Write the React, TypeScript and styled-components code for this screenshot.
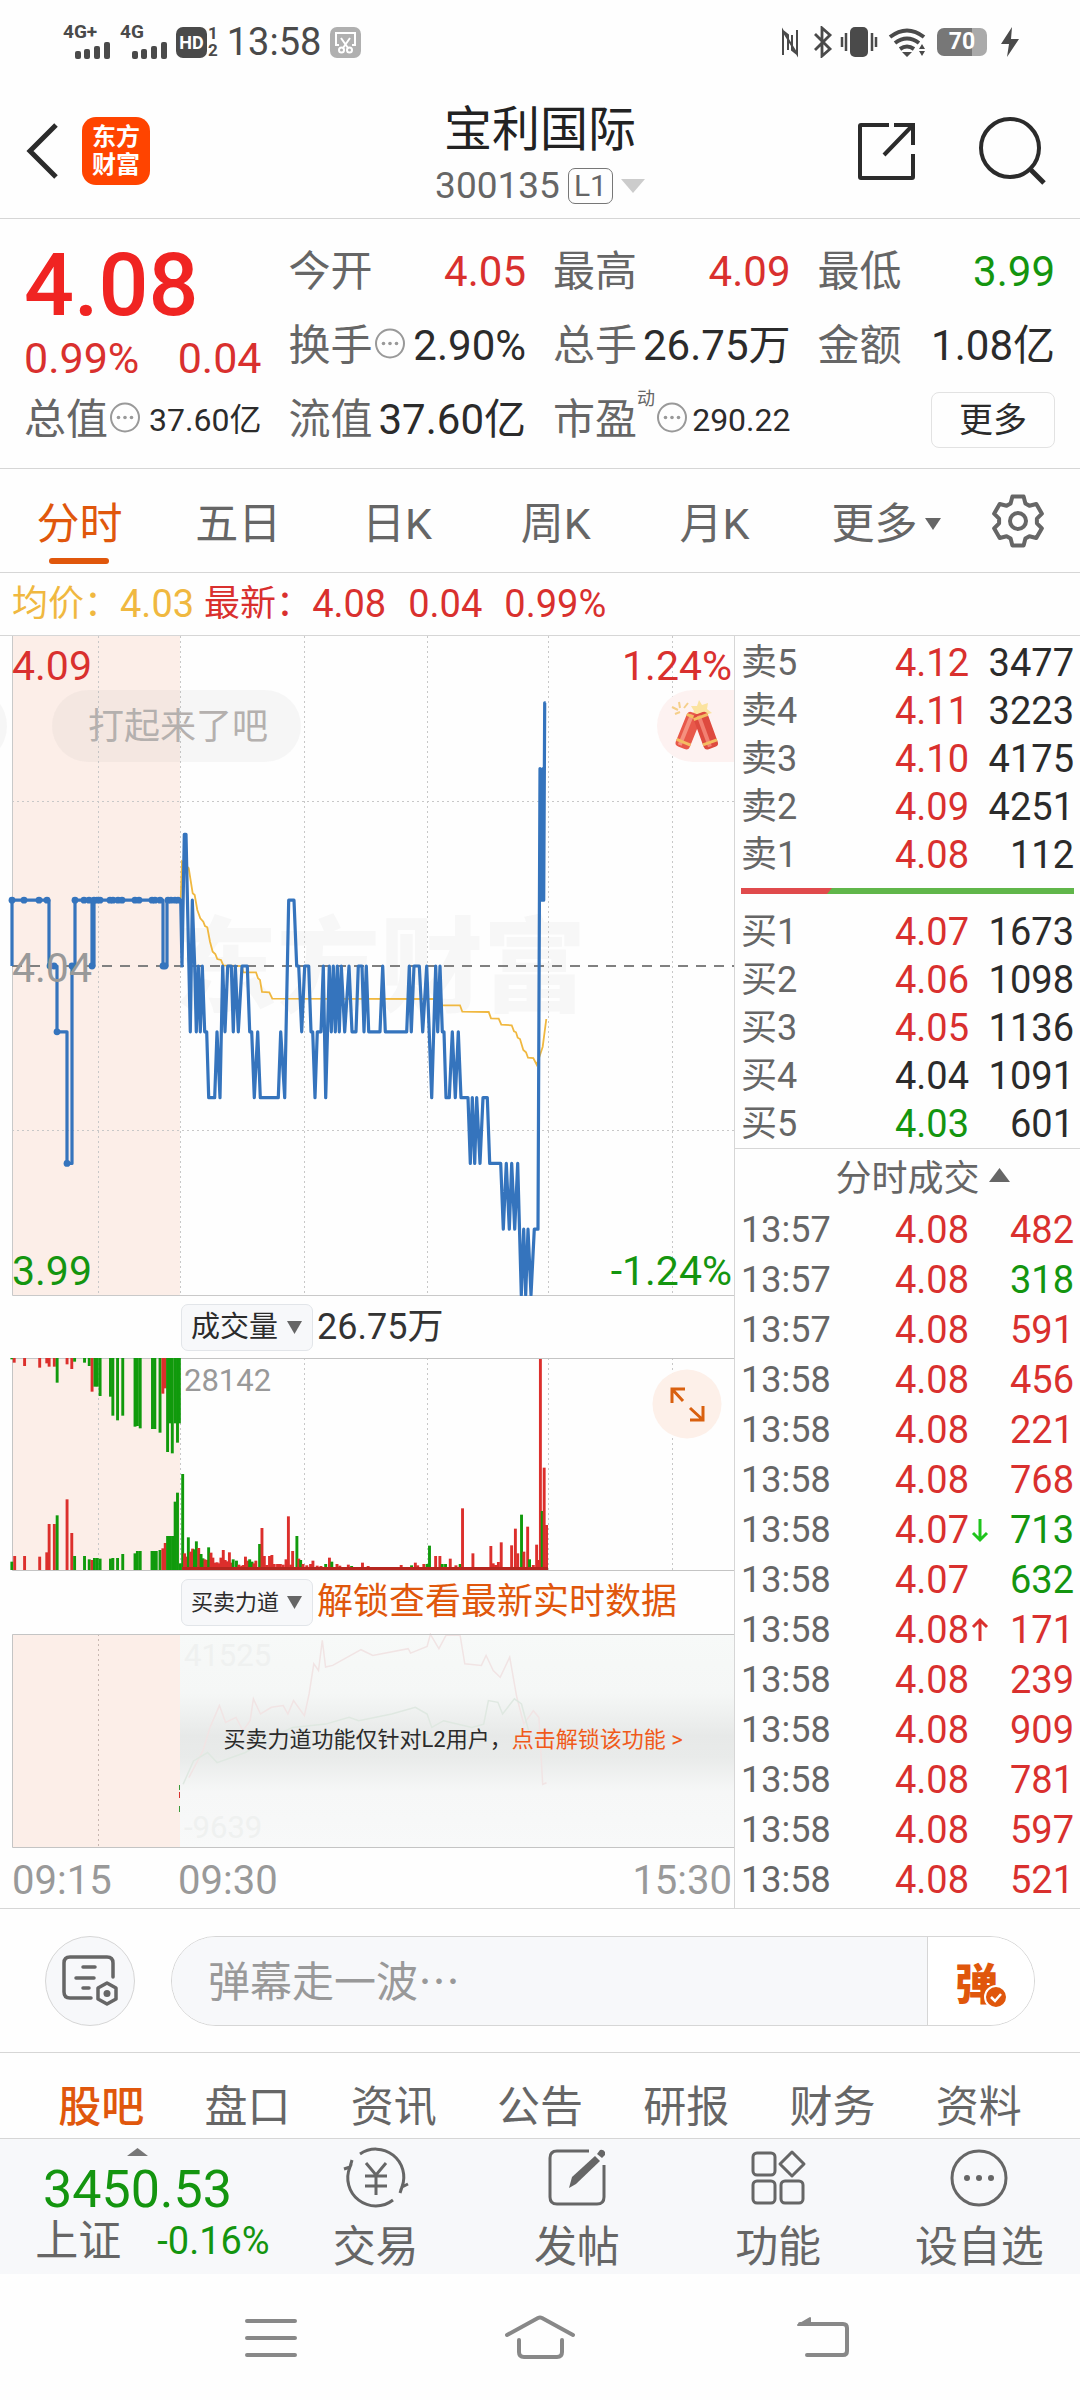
import React from "react";
import styled, { createGlobalStyle, css } from "styled-components";

const C = {
  red: "#d9302e",
  hotRed: "#f02422",
  green: "#14950f",
  ink: "#2b2b2b",
  gray: "#666666",
  light: "#999999",
  line: "#d6d6d6",
  orange: "#e0570c",
  yellow: "#f0b840",
  blue: "#3574bd",
  panel: "#f7f8fa",
  peach: "#fceee8",
};

const FONT = `Roboto, "Noto Sans CJK SC", sans-serif`;

const GlobalStyle = createGlobalStyle`
  * { box-sizing: border-box; }
  body { margin: 0; background: #fefefe; color: ${C.ink}; font-family: ${FONT}; }
  button, input, select { font-family: inherit; color: inherit; margin: 0; padding: 0; border: 0; background: none; }
  svg { display: block; flex: none; }
  a { text-decoration: none; }
`;

type Tone = "red" | "green" | "ink" | "gray";

const Page = styled.div`
  display: flex;
  flex-direction: column;
  min-height: 100vh;
  white-space: nowrap;
`;

/* ---------- status bar ---------- */

const StatusBar = styled.div`
  display: flex;
  justify-content: space-between;
  height: 84px;
  padding: 0 60px 0 62px;
  color: #4a4a4a;
`;
const StatusGroup = styled.div`
  display: flex;
  align-items: center;
  gap: 9px;
`;
const HdBadge = styled.span`
  width: 31px;
  height: 31px;
  border-radius: 7px;
  background: #4a4a4a;
  color: #fff;
  font-size: 18px;
  font-weight: 700;
  line-height: 31px;
  text-align: center;
`;
const SimStack = styled.span`
  display: grid;
  margin-left: -8px;
  font-size: 17px;
  font-weight: 700;
  line-height: 17px;
`;
const Clock = styled.span`
  font-size: 38px;
  line-height: 44px;
`;
const Battery = styled.span`
  width: 50px;
  height: 28px;
  margin-right: 4px;
  border-radius: 7px;
  background: linear-gradient(90deg, #777 70%, #aaa 70%);
  color: #fff;
  font-size: 23px;
  font-weight: 700;
  line-height: 28px;
  text-align: center;
`;

/* ---------- title bar ---------- */

const TitleBar = styled.header`
  display: grid;
  grid-template-columns: 1fr auto 1fr;
  align-items: center;
  height: 135px;
  padding: 0 24px;
  border-bottom: 1px solid ${C.line};
`;
const Side = styled.div<{ $end?: boolean }>`
  display: flex;
  align-items: center;
  gap: ${(p) => (p.$end ? "60px" : "22px")};
  padding-right: ${(p) => (p.$end ? "10px" : "0")};
  justify-content: ${(p) => (p.$end ? "flex-end" : "flex-start")};
`;
const IconButton = styled.button`
  display: flex;
`;
const Logo = styled.a`
  display: grid;
  place-content: center;
  width: 68px;
  height: 68px;
  border-radius: 14px;
  background: #ff4400;
  color: #fff;
  font-size: 24px;
  font-weight: 700;
  line-height: 28px;
`;
const TitleBlock = styled.div`
  display: flex;
  flex-direction: column;
  align-items: center;
  padding-top: 8px;
`;
const StockName = styled.h1`
  margin: 0;
  font-size: 48px;
  font-weight: 400;
  line-height: 62px;
  color: #222;
`;
const CodeButton = styled.button`
  display: flex;
  align-items: center;
  gap: 8px;
  color: ${C.gray};
  font-size: 37px;
  line-height: 50px;
`;
const Level = styled.span`
  padding: 0 5px;
  border: 1px solid #777;
  border-radius: 7px;
  font-size: 30px;
  line-height: 34px;
`;

/* ---------- quote ---------- */

const Quote = styled.section`
  display: grid;
  grid-template-columns: repeat(4, minmax(0, 1fr));
  grid-template-rows: repeat(3, 74px);
  column-gap: 27px;
  padding: 16px 25px 11px 24px;
  border-bottom: 1px solid ${C.line};
`;
const Lead = styled.div`
  grid-row: span 2;
  color: ${C.red};
`;
const Price = styled.div`
  font-size: 88px;
  font-weight: 500;
  line-height: 100px;
  color: ${C.hotRed};
`;
const Change = styled.div`
  display: flex;
  justify-content: space-between;
  font-size: 43px;
  line-height: 46px;
`;
const Field = styled.div`
  display: flex;
  align-items: center;
  justify-content: space-between;
`;
const FieldName = styled.span`
  display: flex;
  align-items: center;
  color: ${C.gray};
  font-size: 42px;
  line-height: 60px;
`;
const Sup = styled.sup`
  align-self: flex-start;
  font-size: 18px;
  line-height: 18px;
`;
const tone = css<{ $tone?: Tone }>`
  color: ${(p) => C[p.$tone ?? "ink"]};
`;
const FieldValue = styled.span<{ $tone?: Tone; $small?: boolean }>`
  font-size: ${(p) => (p.$small ? "32px" : "42px")};
  line-height: 60px;
  ${tone}
`;
const MoreButton = styled.button`
  justify-self: end;
  align-self: center;
  width: 124px;
  height: 56px;
  border: 1px solid #e2e2e2;
  border-radius: 8px;
  font-size: 34px;
  line-height: 52px;
`;

/* ---------- period tabs ---------- */

const Periods = styled.nav`
  display: grid;
  grid-template-columns: repeat(5, 1fr) 184px 102px;
  height: 104px;
  border-bottom: 1px solid ${C.line};
`;
const Period = styled.button<{ $active?: boolean }>`
  display: flex;
  flex-direction: column;
  align-items: center;
  padding-top: 24px;
  color: ${(p) => (p.$active ? C.orange : C.gray)};
  font-size: 43px;
  line-height: 62px;
  &::after {
    content: "";
    width: 60px;
    height: 6px;
    margin-top: 3px;
    border-radius: 3px;
    background: ${(p) => (p.$active ? C.orange : "transparent")};
  }
`;
const PeriodLabel = styled.span`
  display: flex;
  align-items: center;
  gap: 7px;
`;
const SettingsButton = styled(IconButton)`
  align-items: center;
  padding-left: 12px;
`;

const Averages = styled.div`
  display: flex;
  align-items: center;
  height: 63px;
  padding-left: 12px;
  border-bottom: 1px solid ${C.line};
  font-size: 38px;
  color: ${C.red};
`;
const AvgName = styled.span<{ $yellow?: boolean }>`
  font-size: 36px;
  line-height: 50px;
  ${(p) => p.$yellow && `color: ${C.yellow};`}
`;
const AvgValue = styled.span<{ $yellow?: boolean }>`
  margin-right: ${(p) => (p.$yellow ? "10px" : "22px")};
  line-height: 50px;
  ${(p) => p.$yellow && `color: ${C.yellow};`}
`;

/* ---------- main area ---------- */

const Main = styled.main`
  display: grid;
  grid-template-columns: minmax(0, 734fr) minmax(0, 346fr);
  border-bottom: 1px solid ${C.line};
`;
const ChartColumn = styled.div`
  display: flex;
  flex-direction: column;
`;
const ChartSvg = styled.svg`
  width: 100%;
  height: auto;
`;
const IndicatorRow = styled.div`
  display: flex;
  align-items: center;
  gap: 4px;
  height: 62px;
  padding-left: 181px;
`;
const SelectBox = styled.span`
  display: flex;
  align-items: center;
  width: 132px;
  height: 47px;
  border: 1px solid #e2e5e9;
  border-radius: 7px;
  background: ${C.panel};
`;
const Select = styled.select<{ $dense?: boolean }>`
  appearance: none;
  width: 130px;
  height: 45px;
  padding-left: 9px;
  font-size: ${(p) => (p.$dense ? "22px" : "29px")};
  flex: none;
`;
const SelectCaret = styled.span`
  margin-left: -25px;
  pointer-events: none;
`;
const IndicatorValue = styled.span<{ $orange?: boolean }>`
  font-size: 36px;
  line-height: 50px;
  color: ${(p) => (p.$orange ? C.orange : "#333")};
`;
const LockedPanel = styled.div`
  position: relative;
`;
const LockedNotice = styled.p`
  position: absolute;
  inset: 0 0 0 24%;
  display: flex;
  align-items: center;
  justify-content: center;
  margin: 0;
  padding: 0 4px 8px 0;
  font-size: 22px;
`;
const UnlockLink = styled.a`
  color: #f05a1a;
`;
const TimeAxis = styled.div`
  display: grid;
  grid-template-columns: 166px 1fr auto;
  padding: 6px 2px 0 12px;
  color: ${C.light};
  font-size: 40px;
  line-height: 54px;
`;

/* ---------- order book ---------- */

const BookColumn = styled.aside`
  display: flex;
  flex-direction: column;
  border-left: 1px solid ${C.line};
`;
const Book = styled.div`
  display: flex;
  flex-direction: column;
  padding: 3px 6px 0;
  border-bottom: 1px solid ${C.line};
`;
const Table = styled.table`
  width: 100%;
  border-collapse: collapse;
  table-layout: fixed;
`;
const Row = styled.tr<{ $tall?: boolean }>`
  height: ${(p) => (p.$tall ? "50px" : "48px")};
`;
const NameCell = styled.th`
  padding: 0;
  color: ${C.gray};
  font-size: 36px;
  font-weight: 400;
  line-height: 44px;
  text-align: left;
`;
const NumCell = styled.td<{ $tone?: Tone }>`
  padding: 0;
  font-size: 38px;
  line-height: 44px;
  text-align: right;
  ${tone}
`;
const PriceCell = styled(NumCell)`
  width: 124px;
`;
const VolumeCell = styled(NumCell)`
  width: 105px;
`;
const PriceWithTick = styled.span`
  display: inline-flex;
  align-items: center;
`;
const TickSvg = styled.svg`
  width: 18px;
  margin-right: -20px;
  margin-left: 2px;
`;
const RatioSvg = styled.svg`
  width: 100%;
  height: 6px;
  margin: 9px 0 14px;
`;
const TradesToggle = styled.button`
  display: flex;
  align-items: center;
  justify-content: center;
  gap: 9px;
  height: 52px;
  padding-left: 30px;
  color: ${C.gray};
  font-size: 36px;
`;
const Trades = styled.div`
  padding: 4px 6px 0;
`;

/* ---------- comment bar ---------- */

const CommentBar = styled.form`
  display: flex;
  align-items: center;
  gap: 36px;
  height: 144px;
  padding: 0 45px;
  border-bottom: 1px solid ${C.line};
`;
const RoundButton = styled.button`
  display: grid;
  place-items: center;
  flex: none;
  width: 90px;
  height: 90px;
  border: 1px solid ${C.line};
  border-radius: 45px;
  background: ${C.panel};
`;
const InputBox = styled.div`
  display: flex;
  flex: 1;
  height: 90px;
  overflow: hidden;
  border: 1px solid ${C.line};
  border-radius: 45px;
`;
const CommentInput = styled.input`
  flex: 1;
  min-width: 0;
  padding: 4px 36px 0;
  background: ${C.panel};
  font-size: 42px;
  &::placeholder { color: ${C.light}; opacity: 1; }
`;
const BulletButton = styled.button`
  display: flex;
  align-items: center;
  width: 107px;
  padding-left: 27px;
  border-left: 1px solid ${C.line};
  background: #fff;
  color: ${C.orange};
  font-size: 43px;
  font-weight: 900;
`;
const CheckSvg = styled.svg`
  align-self: flex-end;
  margin: 0 0 16px -14px;
`;

/* ---------- section tabs, bottom bar ---------- */

const Sections = styled.nav`
  display: grid;
  grid-template-columns: repeat(7, 1fr);
  height: 85px;
  padding: 22px 28px 0;
`;
const SectionLink = styled.a<{ $active?: boolean }>`
  color: ${(p) => (p.$active ? C.orange : C.gray)};
  font-size: 43px;
  font-weight: ${(p) => (p.$active ? 500 : 400)};
  line-height: 64px;
  text-align: center;
`;
const BottomBar = styled.footer`
  display: grid;
  grid-template-columns: 275px repeat(4, 1fr);
  height: 136px;
  border-top: 1px solid ${C.line};
  background: ${C.panel};
`;
const IndexButton = styled.button`
  display: flex;
  flex-direction: column;
  align-items: center;
  padding-top: 9px;
  color: ${C.green};
`;
const IndexValue = styled.span`
  padding-top: 4px;
  font-size: 52px;
  line-height: 60px;
`;
const IndexRow = styled.span`
  display: flex;
  align-items: center;
  gap: 36px;
  padding-left: 30px;
  font-size: 38px;
  line-height: 42px;
`;
const IndexName = styled.span`
  color: ${C.gray};
  font-size: 43px;
`;
const Action = styled.button`
  display: flex;
  flex-direction: column;
  align-items: center;
  padding-top: 6px;
  color: ${C.gray};
  font-size: 43px;
  line-height: 76px;
`;
const SystemNav = styled.nav`
  display: grid;
  grid-template-columns: repeat(3, 1fr);
  height: 126px;
  padding: 0 135px;
`;
const SystemButton = styled.button`
  display: grid;
  place-items: center;
`;

/* ---------- small drawings ---------- */

const Caret = ({ w, h, color, up }: { w: number; h: number; color: string; up?: boolean }) => (
  <svg width={w} height={h} viewBox="0 0 20 10" preserveAspectRatio="none" aria-hidden="true">
    <path d={up ? "M0 10 10 0 20 10z" : "M0 0H20L10 10z"} fill={color} />
  </svg>
);

const Info = () => (
  <svg width="33" height="37" viewBox="-1 0 33 37" fill={C.light} aria-hidden="true">
    <circle cx="16" cy="15.500" r="14" fill="none" stroke={C.light} strokeWidth="2" />
    <circle cx="9.500" cy="15.500" r="1.800" />
    <circle cx="16" cy="15.500" r="1.800" />
    <circle cx="22.500" cy="15.500" r="1.800" />
  </svg>
);

const Signal = ({ label }: { label: string }) => (
  <svg width="48" height="50" viewBox="0 -7 48 50" fill="#4a4a4a" aria-hidden="true">
    <text x="1" y="14" fontSize="19" fontWeight="700" fontFamily={FONT}>{label}</text>
    <rect x="13" y="27" width="6" height="8" rx="2" />
    <rect x="22" y="25" width="6" height="10" rx="2" />
    <rect x="32" y="22" width="6" height="13" rx="2" />
    <rect x="42" y="18" width="6" height="17" rx="2" />
  </svg>
);

const Scissors = () => (
  <svg width="31" height="31" viewBox="0 0 31 31" fill="none" stroke="#fff" strokeWidth="2" aria-hidden="true">
    <rect width="31" height="31" rx="7" fill="#b0b0b0" stroke="none" />
    <path d="M9 18H6V6H25V18H22M11 11 18 21M20 11 13 21" />
    <circle cx="11.500" cy="23" r="2.500" />
    <circle cx="19.500" cy="23" r="2.500" />
  </svg>
);

const StatusIcons = () => (
  <svg width="148" height="32" viewBox="778 26 148 32" fill="none" stroke="#4a4a4a" strokeWidth="3" aria-hidden="true">
    <path d="M781 55V31L795 54V30M781 31 786 35V50M795 54 790 50V35" strokeWidth="2" />
    <path d="M813 34 828 49 820 56V28L828 35 813 50" strokeWidth="2.800" />
    <rect x="848" y="27" width="18" height="30" rx="5" fill="#4a4a4a" stroke="none" />
    <path d="M844 33V51M840 37V47M870 33V51M874 37V47" strokeWidth="2.500" />
    <path d="M888 37Q905 24 922 37M893 43Q905 34 917 43M898 49Q905 44 912 49" strokeWidth="4" />
    <path d="M905 57 900 52H910zM920 44 917 49H923zM920 56 917 51H923z" fill="#4a4a4a" stroke="none" />
  </svg>
);

const gearPoints = Array.from({ length: 6 }, (_, k) =>
  [[-23, 19], [-13, 25], [13, 25], [23, 19]].map(([d, r]) => {
    const a = ((k * 60 - 90 + d) * Math.PI) / 180;
    return `${(28 + r * Math.cos(a)).toFixed(1)},${(28 + r * Math.sin(a)).toFixed(1)}`;
  }).join(" ")
).join(" ");

const Gear = () => (
  <svg width="56" height="56" viewBox="0 0 56 56" fill="none" stroke={C.gray} strokeWidth="4" strokeLinejoin="round" aria-hidden="true">
    <polygon points={gearPoints} />
    <circle cx="28" cy="28" r="8" />
  </svg>
);

/* ---------- price chart ---------- */

const MID = 966;
const TICK = 65.8;
const levelY = (l: number) => MID - l * TICK;

const preOpen: [number, number][] = [
  [12, 0], [12, 1], [49, 1], [49, 0], [57, 0], [57, -1], [67, -1], [67, -3], [72, -3], [72, 0], [75, 0], [75, 1],
  [92, 1], [92, 0], [94, 0], [94, 1], [163, 1], [163, 0], [167, 0], [167, 1], [180, 1],
];
const session: [number, number][] = [
  [62, 1], [66, 0], [73, 3], [78, 3], [91, -1], [97, 1], [104, 0], [109, -1], [115, 0], [121, -1], [127, 0],
  [134, -1], [140, -1], [146, -2], [164, -2], [171, -1], [180, -2], [188, 0], [195, -1], [203, 0], [214, 0],
  [220, -1], [226, 0], [235, -1], [246, 0], [262, 0], [269, -1], [275, -1], [283, -2], [293, -1], [301, -2],
  [355, -2], [362, -1], [374, -2], [386, 1], [402, 1], [410, 0], [416, 0], [425, -1], [434, 0], [446, 0],
  [453, -1], [458, -1], [465, -2], [472, -1], [483, -1], [490, 0], [497, -2], [508, 0], [514, -1], [520, 0],
  [526, -1], [532, 0], [538, -1], [544, 0], [554, -1], [567, 0], [576, -1], [588, -1], [595, 0], [606, 0],
  [612, -1], [619, 0], [626, -1], [660, -1], [668, 0], [676, -1], [740, -1], [748, 0], [754, -1], [762, 0],
  [778, 0], [788, -1], [800, 0], [815, -2], [827, 0], [833, -1], [840, 0], [847, -1], [852, -1], [858, -2],
  [868, -2], [877, -1], [886, -2], [895, -1], [903, -2], [924, -2], [931, -3], [937, -2], [944, -3], [950, -2],
  [960, -3], [969, -2], [982, -2], [989, -3], [1022, -3], [1030, -4], [1039, -3], [1048, -4], [1055, -3],
  [1064, -4], [1073, -3], [1084, -5], [1091, -4], [1097, -5], [1104, -4], [1113, -5], [1123, -4], [1134, -4],
  [1140, 3], [1145, 1], [1149, 3], [1151, 1], [1154, 4], [1157, 4],
];
// The first spike of the session only reaches two ticks above the open.
const pricePoints = [
  ...preOpen.map(([x, l]) => [x, levelY(l)]),
  ...session.map(([x, l], i) => [160 + x / 3, levelY(l === 3 && i < 5 ? 2 : l)]),
].map((p) => p.map((n) => n.toFixed(1)).join(",")).join(" ");

const average: [number, number][] = [
  [62, 296], [66, 185], [86, 205], [98, 280], [104, 285], [112, 330], [121, 355], [130, 365], [135, 378], [142, 382],
  [150, 425], [158, 455], [166, 462], [172, 477], [183, 480], [190, 496], [245, 498], [250, 517], [288, 517],
  [294, 535], [300, 540], [306, 576], [328, 577], [337, 596], [840, 597], [847, 616], [900, 616], [907, 635],
  [986, 636], [993, 655], [1016, 656], [1024, 674], [1055, 676], [1062, 694], [1068, 697], [1073, 713],
  [1080, 717], [1090, 750], [1098, 757], [1104, 773], [1120, 774], [1130, 794], [1140, 765], [1148, 740], [1159, 657],
];
const averagePoints = average.map(([x, y]) => `${(160 + x / 3).toFixed(1)},${(800 + y / 3).toFixed(1)}`).join(" ");

const dots: [number, number][] = [
  ...[12, 24, 39, 47, 75, 84, 89, 94, 97, 100, 110, 113, 118, 122, 135, 139, 152, 155, 160, 168, 171, 175, 178].map(
    (x) => [x, 1] as [number, number]
  ),
  [50, 0], [54, 0], [72, 0], [92, 0], [163, 0], [165, 0], [57, -1], [67, -3],
];
const gridX = [98, 180, 304, 427, 548, 672];

const Grid = ({ top, bottom }: { top: number; bottom: number }) => (
  <g stroke="#c8c8c8" strokeDasharray="2 3">
    {gridX.map((x) => (
      <path key={x} d={`M${x}.5 ${top}V${bottom}`} />
    ))}
  </g>
);

const PriceChart = () => (
  <ChartSvg viewBox="0 636 734 660" role="img" fontFamily={FONT}>
    <rect x="12" y="636" width="168" height="659" fill={C.peach} />
    <text x="174" y="1004" fontSize="103" fontWeight="900" fill="#f7f7f7">东方财富</text>
    <Grid top={636} bottom={1295} />
    <path d="M12 801.5H734M12 1130.5H734" stroke="#c8c8c8" strokeDasharray="2 3" />
    <path d="M12.500 636V1295.500H734" fill="none" stroke="#c9c9c9" />
    <rect x="-60" y="690" width="67" height="72" rx="36" fill="#969696" fillOpacity=".08" />
    <rect x="52" y="690" width="249" height="72" rx="36" fill="#969696" fillOpacity=".08" />
    <text x="88" y="739" fontSize="36" fill="#b4b0ae">打起来了吧</text>
    <path d="M734 690H693a36 36 0 0 0 0 72H734z" fill="#fdf2f1" />
    <g>
      <path d="M672 707l6 3M679 702l1 6M688 703l-4 5M675 714l5-2" stroke="#f5cf8a" strokeWidth="2" />
      <path d="M699 700l3 5 6-2-1 6 5 4-7 2-3 5-4-4-7 0 3-5-3-5 6 0z" fill="#fbe3a0" />
      <g transform="rotate(22 688 730)">
        <rect x="681" y="712" width="15" height="37" rx="4" fill="#e8584a" />
        <rect x="684" y="714" width="4" height="33" fill="#f5907f" />
        <path d="M681 716H696M681 743H696" stroke="#f3bd62" strokeWidth="3" />
      </g>
      <g transform="rotate(-20 706 730)">
        <rect x="698" y="712" width="15" height="37" rx="4" fill="#de4a3f" />
        <rect x="702" y="714" width="4" height="33" fill="#f28072" />
        <path d="M698 716H713M698 743H713" stroke="#f3bd62" strokeWidth="3" />
      </g>
    </g>
    <polyline points={averagePoints} fill="none" stroke={C.yellow} strokeWidth="1.800" />
    <path d={`M12 ${MID}H734`} stroke="#808080" strokeWidth="2" strokeDasharray="10 8" />
    <polyline points={pricePoints} fill="none" stroke={C.blue} strokeWidth="3.200" strokeLinejoin="round" />
    {dots.map(([x, l], i) => (
      <circle key={i} cx={x} cy={levelY(l)} r="3.400" fill={C.blue} />
    ))}
    <g fontSize="41">
      <text x="12" y="680" fill={C.red}>4.09</text>
      <text x="732" y="680" fill={C.red} textAnchor="end">1.24%</text>
      <text x="12" y="982" fill={C.light}>4.04</text>
      <text x="12" y="1285" fill={C.green}>3.99</text>
      <text x="732" y="1285" fill={C.green} textAnchor="end">-1.24%</text>
    </g>
  </ChartSvg>
);

/* ---------- volume chart ---------- */

type Bar = [number, number, 0 | 1];
const hanging: Bar[] = [
  [25, 208, 1], [30, 218, 0], [52, 228, 0], [84, 233, 0], [99, 220, 0], [104, 230, 0], [115, 230, 0], [121, 278, 1],
  [142, 223, 0], [152, 237, 0], [158, 215, 1], [179, 218, 1], [189, 228, 1], [195, 305, 0], [201, 290, 1], [206, 290, 1],
  [212, 318, 1], [234, 320, 1], [239, 377, 1], [249, 391, 1], [260, 377, 1], [286, 410, 1], [291, 408, 1], [297, 415, 1],
  [323, 417, 1], [328, 417, 1], [339, 428, 1], [345, 311, 0], [350, 295, 0], [355, 486, 1], [361, 400, 1], [365, 490, 1],
  [371, 400, 1], [376, 458, 1], [380, 400, 1],
];
const rising: Bar[] = [
  [25, 815, 1], [31, 798, 0], [52, 798, 0], [84, 800, 0], [99, 787, 0], [104, 702, 0], [115, 702, 0], [121, 676, 1],
  [142, 628, 0], [152, 729, 0], [158, 798, 1], [179, 798, 1], [189, 808, 1], [195, 810, 0], [200, 804, 1], [206, 804, 1],
  [212, 806, 1], [234, 806, 1], [239, 804, 1], [249, 804, 1], [260, 792, 1], [286, 790, 1], [291, 783, 1], [297, 783, 1],
  [322, 783, 1], [327, 783, 1], [331, 783, 1], [339, 780, 1], [345, 775, 0], [350, 759, 0], [355, 738, 1], [361, 738, 1],
  [366, 738, 1], [371, 635, 1], [376, 608, 1], [382, 820, 1], [387, 552, 1], [391, 790, 0], [395, 800, 0], [399, 742, 1],
  [404, 785, 0], [408, 776, 0], [412, 778, 1], [416, 754, 1], [421, 774, 0], [426, 792, 1], [430, 805, 1], [434, 808, 0],
  [438, 810, 0], [442, 772, 1], [447, 788, 0], [451, 803, 0], [456, 818, 0], [460, 817, 0], [464, 820, 0], [468, 803, 0],
  [473, 780, 0], [477, 810, 0], [481, 814, 0], [486, 787, 0], [490, 818, 0], [494, 808, 1], [501, 812, 1], [506, 824, 0],
  [512, 827, 0], [516, 825, 0], [520, 800, 0], [525, 812, 0], [529, 808, 1], [534, 815, 1], [538, 820, 0], [542, 812, 0],
  [550, 762, 1], [555, 714, 0], [560, 798, 0], [565, 825, 0], [571, 798, 0], [576, 795, 0], [581, 822, 0], [588, 822, 0],
  [594, 822, 0], [600, 824, 0], [606, 808, 0], [611, 679, 0], [616, 824, 0], [620, 783, 0], [629, 738, 1], [633, 806, 0],
  [637, 810, 1], [642, 822, 0], [650, 826, 0], [658, 822, 0], [663, 812, 0], [672, 827, 0], [680, 828, 0], [690, 822, 1],
  [698, 803, 0], [703, 815, 1], [714, 822, 0], [720, 827, 0], [738, 824, 0], [745, 828, 1], [768, 818, 0], [780, 828, 0],
  [850, 825, 0], [872, 826, 1], [880, 818, 0], [885, 826, 0], [898, 822, 0], [905, 822, 1], [910, 767, 1], [923, 798, 0],
  [932, 798, 0], [937, 822, 1], [944, 822, 1], [954, 806, 0], [966, 826, 0], [975, 822, 1], [980, 655, 0], [1002, 790, 0],
  [1040, 768, 0], [1045, 820, 0], [1050, 825, 0], [1056, 816, 0], [1062, 757, 0], [1084, 766, 0], [1092, 716, 0],
  [1097, 790, 0], [1105, 674, 1], [1110, 785, 0], [1118, 710, 0], [1122, 808, 1], [1130, 825, 0], [1137, 764, 0],
  [1141, 810, 0], [1145, 207, 0], [1149, 663, 1], [1153, 533, 0], [1158, 705, 0],
];
const barX = (x: number) => x / 2.119 - 1.4;
const barY = (y: number) => 1290 + y / 3;
const barFill = (up: 0 | 1) => (up ? "#109a0c" : "#dc2f2c");

const VolumeChart = () => (
  <ChartSvg viewBox="0 1358 734 213" role="img" fontFamily={FONT}>
    <rect x="12" y="1358" width="168" height="212" fill={C.peach} />
    <Grid top={1358} bottom={1570} />
    <path d="M734 1358.500H12.500V1570.500H734" fill="none" stroke="#c4c4c4" />
    {hanging.map(([x, y, up], i) => (
      <rect key={i} x={barX(x)} y="1358" width="2.900" height={barY(y) - 1358} fill={barFill(up)} />
    ))}
    {rising.map(([x, y, up], i) => (
      <rect key={i} x={barX(x)} y={barY(y)} width="2.900" height={1570 - barY(y)} fill={barFill(up)} />
    ))}
    <rect x="182" y="1567" width="366" height="3" fill="#b5261f" />
    <text x="184" y="1391" fontSize="31" fill={C.light}>28142</text>
    <circle cx="687" cy="1404" r="34.500" fill="#fdf0e9" />
    <path d="M672 1403V1389H685M672 1389 683 1401M703 1406V1420H690M703 1420 690 1408" fill="none" stroke="#d9600f" strokeWidth="3" />
  </ChartSvg>
);

/* ---------- locked strength chart ---------- */

const toPanel = (pts: [number, number][]) =>
  pts.map(([x, y]) => `${(x / 2.119).toFixed(1)},${(1570 + y / 2.986).toFixed(1)}`).join(" ");
const buyLine = toPanel([
  [400, 620], [430, 540], [445, 470], [465, 405], [478, 455], [500, 440], [515, 480], [530, 450], [537, 385], [552, 430],
  [575, 410], [600, 405], [610, 430], [622, 390], [645, 435], [655, 370], [665, 280], [675, 300], [683, 210], [690, 290],
  [705, 285], [765, 238], [790, 255], [865, 235], [870, 248], [905, 228], [912, 192], [930, 235], [945, 195], [975, 195],
  [985, 280], [1020, 285], [1030, 255], [1045, 300], [1060, 320], [1080, 260], [1095, 380], [1110, 460], [1130, 420],
  [1142, 440], [1150, 640], [1158, 635],
]);
const sellLine = toPanel([
  [388, 640], [410, 570], [440, 545], [460, 575], [520, 545], [560, 510], [620, 470], [690, 460], [740, 440], [760, 450],
  [830, 430], [880, 410], [905, 430], [915, 470], [940, 450], [1000, 470], [1025, 460], [1035, 390], [1055, 395],
  [1065, 430], [1090, 385], [1105, 400], [1120, 480],
]);

const StrengthChart = () => (
  <ChartSvg viewBox="0 1633 734 215" role="img" fontFamily={FONT}>
    <defs>
      <linearGradient id="veil" x1="0" y1="0" x2="0" y2="1">
        <stop offset="0" stopColor="#f7f9f8" />
        <stop offset=".28" stopColor="#f5f7f6" />
        <stop offset=".48" stopColor="#e7e9e8" />
        <stop offset=".58" stopColor="#e9ebea" />
        <stop offset=".74" stopColor="#f6f7f7" />
        <stop offset="1" stopColor="#f8f9f9" />
      </linearGradient>
    </defs>
    <rect x="12" y="1634" width="168" height="213" fill={C.peach} />
    <path d="M98.500 1634V1847" stroke="#c8b8b2" strokeDasharray="2 3" />
    <rect x="180" y="1634" width="554" height="213" fill="url(#veil)" />
    <g fontSize="31" fill="#eff1f0">
      <text x="184" y="1666">41525</text>
      <text x="184" y="1838">-9639</text>
    </g>
    <polyline points={buyLine} fill="none" stroke="#f1e4e4" strokeWidth="1.500" />
    <polyline points={sellLine} fill="none" stroke="#dfe8e1" strokeWidth="1.500" />
    <path d="M734 1634.500H12.500V1847.500H734" fill="none" stroke="#c4c4c4" />
    <path d="M179.500 1785V1790M179.500 1806V1812" stroke="#3a9a3a" />
    <path d="M179.500 1792V1798" stroke={C.red} />
  </ChartSvg>
);

/* ---------- data ---------- */

type BookLine = [string, string, string, Tone];
const asks: BookLine[] = [
  ["卖5", "4.12", "3477", "red"], ["卖4", "4.11", "3223", "red"], ["卖3", "4.10", "4175", "red"],
  ["卖2", "4.09", "4251", "red"], ["卖1", "4.08", "112", "red"],
];
const bids: BookLine[] = [
  ["买1", "4.07", "1673", "red"], ["买2", "4.06", "1098", "red"], ["买3", "4.05", "1136", "red"],
  ["买4", "4.04", "1091", "ink"], ["买5", "4.03", "601", "green"],
];
type Trade = [string, string, string, Tone, ("up" | "down")?];
const trades: Trade[] = [
  ["13:57", "4.08", "482", "red"], ["13:57", "4.08", "318", "green"], ["13:57", "4.08", "591", "red"],
  ["13:58", "4.08", "456", "red"], ["13:58", "4.08", "221", "red"], ["13:58", "4.08", "768", "red"],
  ["13:58", "4.07", "713", "green", "down"], ["13:58", "4.07", "632", "green"], ["13:58", "4.08", "171", "red", "up"],
  ["13:58", "4.08", "239", "red"], ["13:58", "4.08", "909", "red"], ["13:58", "4.08", "781", "red"],
  ["13:58", "4.08", "597", "red"], ["13:58", "4.08", "521", "red"],
];

const BookTable = ({ lines }: { lines: BookLine[] }) => (
  <Table>
    <tbody>
      {lines.map(([name, price, volume, t]) => (
        <Row key={name}>
          <NameCell scope="row">{name}</NameCell>
          <PriceCell $tone={t}>{price}</PriceCell>
          <VolumeCell>{volume}</VolumeCell>
        </Row>
      ))}
    </tbody>
  </Table>
);

const Tick = ({ dir }: { dir: "up" | "down" }) => (
  <TickSvg height="26" viewBox="0 0 18 26" fill="none" stroke={dir === "up" ? C.red : "#1fc41c"} strokeWidth="3" aria-hidden="true">
    <path d={dir === "up" ? "M9 24V3M2 10 9 3 16 10" : "M9 2V23M2 16 9 23 16 16"} />
  </TickSvg>
);

const Dropdown = ({ text, dense }: { text: string; dense?: boolean }) => (
  <SelectBox>
    <Select $dense={dense} aria-label={text}>
      <option>{text}</option>
    </Select>
    <SelectCaret>
      <Caret w={15} h={13} color={C.gray} />
    </SelectCaret>
  </SelectBox>
);

const stroke = { fill: "none", stroke: C.gray, strokeWidth: 3 } as const;

const TradeIcon = () => (
  <svg width="68" height="64" viewBox="0 0 68 64" {...stroke} aria-hidden="true">
    <path d="M18 9A28 28 0 0 1 60 42L66 39M60 42 58 48" />
    <path d="M51 55A28 28 0 0 1 8 22L2 24M8 22 10 15" />
    <path d="M24 18 34 30 44 18M23 31H45M23 41H45M34 30V50" />
  </svg>
);
const PostIcon = () => (
  <svg width="64" height="64" viewBox="0 0 64 64" {...stroke} aria-hidden="true">
    <path d="M44 6H12Q5 6 5 13V52Q5 59 12 59H52Q59 59 59 52V20" />
    <path d="M24 43 27 32 50 11 55 16 31 39z" fill={C.gray} stroke="none" />
    <path d="M52 9 55 5Q58 4 60 7L60 10 57 13z" fill={C.gray} stroke="none" />
  </svg>
);
const GridIcon = () => (
  <svg width="64" height="64" viewBox="0 0 64 64" {...stroke} strokeLinejoin="round" aria-hidden="true">
    <rect x="7" y="8" width="22" height="22" rx="4" />
    <rect x="7" y="36" width="22" height="22" rx="4" />
    <rect x="35" y="36" width="22" height="22" rx="4" />
    <path d="M46 7 58 19 46 31 34 19z" />
  </svg>
);
const DotsIcon = () => (
  <svg width="64" height="64" viewBox="0 0 64 64" {...stroke} aria-hidden="true">
    <circle cx="32" cy="33" r="27" />
    <g fill={C.gray} stroke="none">
      <circle cx="20" cy="33" r="3" />
      <circle cx="32" cy="33" r="3" />
      <circle cx="44" cy="33" r="3" />
    </g>
  </svg>
);

const actions: [string, React.ReactNode][] = [
  ["交易", <TradeIcon key="t" />],
  ["发帖", <PostIcon key="p" />],
  ["功能", <GridIcon key="g" />],
  ["设自选", <DotsIcon key="d" />],
];

export default function App() {
  return (
    <Page>
      <GlobalStyle />
      <StatusBar>
        <StatusGroup>
          <Signal label="4G+" />
          <Signal label="4G" />
          <HdBadge>HD</HdBadge>
          <SimStack>
            <span>1</span>
            <span>2</span>
          </SimStack>
          <Clock>13:58</Clock>
          <Scissors />
        </StatusGroup>
        <StatusGroup>
          <StatusIcons />
          <Battery>70</Battery>
          <svg width="20" height="30" viewBox="0 0 20 30" fill="#4a4a4a" aria-hidden="true">
            <path d="M12 0 1 17H9L7 30 19 12H11z" />
          </svg>
        </StatusGroup>
      </StatusBar>

      <TitleBar>
        <Side>
          <IconButton type="button" aria-label="返回">
            <svg width="36" height="58" viewBox="0 0 36 58" fill="none" stroke="#2b2b2b" strokeWidth="5" aria-hidden="true">
              <path d="M32 3 6 29 32 55" />
            </svg>
          </IconButton>
          <Logo href="#">
            <span>东方</span>
            <span>财富</span>
          </Logo>
        </Side>
        <TitleBlock>
          <StockName>宝利国际</StockName>
          <CodeButton type="button">
            300135
            <Level>L1</Level>
            <Caret w={24} h={14} color="#cccccc" />
          </CodeButton>
        </TitleBlock>
        <Side $end>
          <IconButton type="button" aria-label="分享">
            <svg width="62" height="62" viewBox="0 0 62 62" fill="none" stroke="#2b2b2b" strokeWidth="4" aria-hidden="true">
              <path d="M33 5H5Q4 5 4 6V57Q4 58 5 58H56Q57 58 57 57V34M38 5H57V25M56 6 28 35" />
            </svg>
          </IconButton>
          <IconButton type="button" aria-label="搜索">
            <svg width="68" height="70" viewBox="0 0 68 70" fill="none" stroke="#2b2b2b" strokeWidth="4" aria-hidden="true">
              <circle cx="32" cy="32" r="29" />
              <path d="M53 54 66 67" strokeWidth="5" />
            </svg>
          </IconButton>
        </Side>
      </TitleBar>

      <Quote>
        <Lead>
          <Price>4.08</Price>
          <Change>
            <span>0.99%</span>
            <span>0.04</span>
          </Change>
        </Lead>
        <Field><FieldName>今开</FieldName><FieldValue $tone="red">4.05</FieldValue></Field>
        <Field><FieldName>最高</FieldName><FieldValue $tone="red">4.09</FieldValue></Field>
        <Field><FieldName>最低</FieldName><FieldValue $tone="green">3.99</FieldValue></Field>
        <Field><FieldName>换手<Info /></FieldName><FieldValue>2.90%</FieldValue></Field>
        <Field><FieldName>总手</FieldName><FieldValue>26.75万</FieldValue></Field>
        <Field><FieldName>金额</FieldName><FieldValue>1.08亿</FieldValue></Field>
        <Field><FieldName>总值<Info /></FieldName><FieldValue $small>37.60亿</FieldValue></Field>
        <Field><FieldName>流值</FieldName><FieldValue>37.60亿</FieldValue></Field>
        <Field><FieldName>市盈<Sup>动</Sup><Info /></FieldName><FieldValue $small>290.22</FieldValue></Field>
        <MoreButton type="button">更多</MoreButton>
      </Quote>

      <Periods>
        {["分时", "五日", "日K", "周K", "月K"].map((t, i) => (
          <Period key={t} type="button" $active={i === 0}>{t}</Period>
        ))}
        <Period type="button">
          <PeriodLabel>
            更多
            <Caret w={16} h={12} color={C.gray} />
          </PeriodLabel>
        </Period>
        <SettingsButton type="button" aria-label="设置">
          <Gear />
        </SettingsButton>
      </Periods>

      <Averages>
        <AvgName $yellow>均价：</AvgName>
        <AvgValue $yellow>4.03</AvgValue>
        <AvgName>最新：</AvgName>
        <AvgValue>4.08</AvgValue>
        <AvgValue>0.04</AvgValue>
        <AvgValue>0.99%</AvgValue>
      </Averages>

      <Main>
        <ChartColumn>
          <PriceChart />
          <IndicatorRow>
            <Dropdown text="成交量" />
            <IndicatorValue>26.75万</IndicatorValue>
          </IndicatorRow>
          <VolumeChart />
          <IndicatorRow>
            <Dropdown text="买卖力道" dense />
            <IndicatorValue $orange>解锁查看最新实时数据</IndicatorValue>
          </IndicatorRow>
          <LockedPanel>
            <StrengthChart />
            <LockedNotice>
              买卖力道功能仅针对L2用户，
              <UnlockLink href="#">点击解锁该功能 &gt;</UnlockLink>
            </LockedNotice>
          </LockedPanel>
          <TimeAxis>
            <span>09:15</span>
            <span>09:30</span>
            <span>15:30</span>
          </TimeAxis>
        </ChartColumn>

        <BookColumn>
          <Book>
            <BookTable lines={asks} />
            <RatioSvg viewBox="0 0 333 6" preserveAspectRatio="none" aria-hidden="true">
              <rect width="333" height="6" fill="#60b64a" />
              <path d="M0 0H91L86 6H0z" fill="#e04a4c" />
            </RatioSvg>
            <BookTable lines={bids} />
          </Book>
          <TradesToggle type="button">
            分时成交
            <Caret w={21} h={14} color={C.gray} up />
          </TradesToggle>
          <Trades>
            <Table>
              <tbody>
                {trades.map(([time, price, volume, t, dir], i) => (
                  <Row key={i} $tall>
                    <NameCell scope="row">{time}</NameCell>
                    <PriceCell $tone="red">
                      <PriceWithTick>
                        {price}
                        {dir && <Tick dir={dir} />}
                      </PriceWithTick>
                    </PriceCell>
                    <VolumeCell $tone={t}>{volume}</VolumeCell>
                  </Row>
                ))}
              </tbody>
            </Table>
          </Trades>
        </BookColumn>
      </Main>

      <CommentBar onSubmit={(e) => e.preventDefault()}>
        <RoundButton type="button" aria-label="弹幕设置">
          <svg width="60" height="54" viewBox="0 0 60 54" {...stroke} strokeWidth="3.500" strokeLinecap="round" aria-hidden="true">
            <path d="M31 44H10Q4 44 4 38V9Q4 3 10 3H47Q53 3 53 9V23M23 13H35M16 24H34M23 34H29" />
            <path d="M47 29 56 34V45L47 50 38 45V34z" strokeLinejoin="round" />
            <circle cx="47" cy="39.500" r="3.500" fill={C.gray} stroke="none" />
          </svg>
        </RoundButton>
        <InputBox>
          <CommentInput type="text" placeholder="弹幕走一波⋯" aria-label="弹幕走一波" />
          <BulletButton type="button">
            弹
            <CheckSvg width="24" height="24" viewBox="0 0 24 24" aria-hidden="true">
              <circle cx="12" cy="12" r="11" fill={C.orange} stroke="#fff" strokeWidth="2" />
              <path d="M7 12 11 16 17 9" fill="none" stroke="#fff" strokeWidth="2.500" />
            </CheckSvg>
          </BulletButton>
        </InputBox>
      </CommentBar>

      <Sections>
        {["股吧", "盘口", "资讯", "公告", "研报", "财务", "资料"].map((t, i) => (
          <SectionLink key={t} href="#" $active={i === 0}>{t}</SectionLink>
        ))}
      </Sections>

      <BottomBar>
        <IndexButton type="button">
          <Caret w={21} h={8} color="#777777" up />
          <IndexValue>3450.53</IndexValue>
          <IndexRow>
            <IndexName>上证</IndexName>
            -0.16%
          </IndexRow>
        </IndexButton>
        {actions.map(([label, icon]) => (
          <Action key={label} type="button">
            {icon}
            {label}
          </Action>
        ))}
      </BottomBar>

      <SystemNav>
        <SystemButton type="button" aria-label="菜单">
          <svg width="80" height="50" viewBox="0 0 80 50" fill="none" stroke="#888" strokeWidth="4" strokeLinecap="round" aria-hidden="true">
            <path d="M17 9H65M17 26H65M17 43H65" />
          </svg>
        </SystemButton>
        <SystemButton type="button" aria-label="主页">
          <svg width="80" height="50" viewBox="0 0 80 50" fill="none" stroke="#888" strokeWidth="4" strokeLinecap="round" strokeLinejoin="round" aria-hidden="true">
            <path d="M7 23 38 6Q40 5 42 6L73 23M19 28V40Q19 45 24 45H57Q62 45 62 40V28" />
          </svg>
        </SystemButton>
        <SystemButton type="button" aria-label="后退">
          <svg width="80" height="50" viewBox="0 0 80 50" fill="none" stroke="#888" strokeWidth="4" strokeLinecap="round" strokeLinejoin="round" aria-hidden="true">
            <path d="M30 12H73Q77 12 77 16V39Q77 43 73 43H37" />
            <path d="M28 13 40 6V13z" fill="#888" strokeWidth="2" />
          </svg>
        </SystemButton>
      </SystemNav>
    </Page>
  );
}
